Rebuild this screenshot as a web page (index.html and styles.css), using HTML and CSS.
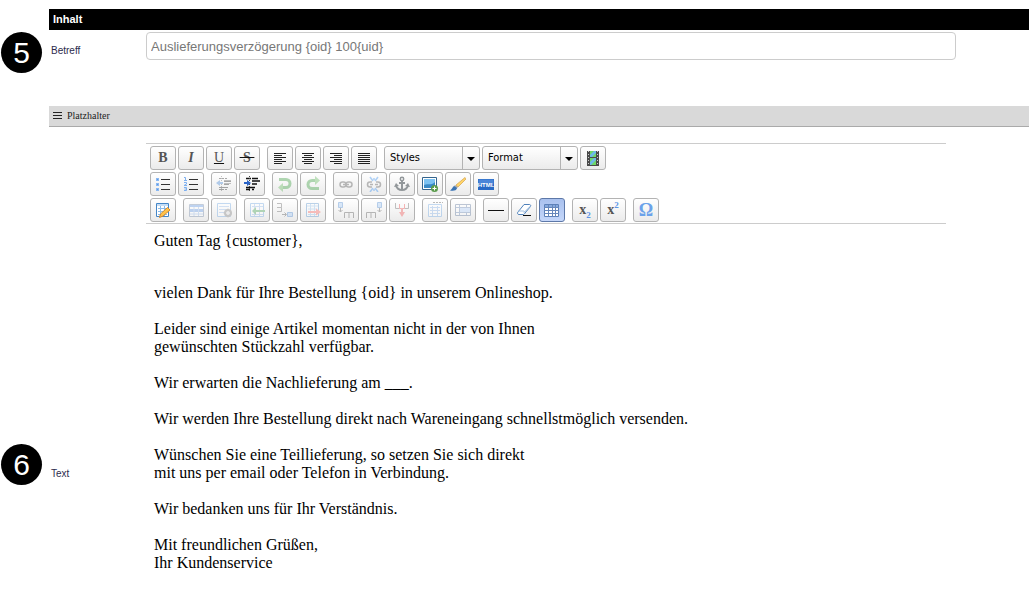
FILE: index.html
```html
<!DOCTYPE html>
<html lang="de">
<head>
<meta charset="utf-8">
<title>E-Mail-Vorlage</title>
<link rel="stylesheet" href="styles.css">
</head>
<body>
<main class="page">
<h1 class="section-title">Inhalt</h1>
<div class="row row-subject">
  <span class="badge">5</span>
  <label class="label" for="subject">Betreff</label>
  <input class="subject" id="subject" type="text" value="Auslieferungsverzögerung {oid} 100{uid}">
</div>
<button type="button" class="placeholder-bar">
  <svg class="menu-icon" viewBox="0 0 9 9"><path d="M0 1.500h9M0 4.500h9M0 7.500h9" stroke="#222"/></svg>
  Platzhalter
</button>
<div class="row row-text">
  <span class="badge">6</span>
  <span class="label" id="text-label">Text</span>
  <div class="editor">
    <div class="toolbar" role="toolbar" aria-label="Formatierung">
      <div class="tools">
        <div class="group">
          <button type="button" class="tool" aria-label="Fett"><span class="glyph bold">B</span></button>
          <button type="button" class="tool" aria-label="Kursiv"><span class="glyph italic">I</span></button>
          <button type="button" class="tool" aria-label="Unterstrichen"><span class="glyph underline">U</span></button>
          <button type="button" class="tool" aria-label="Durchgestrichen"><span class="glyph strike">&nbsp;S&nbsp;</span></button>
        </div>
        <div class="group">
          <button type="button" class="tool" aria-label="Linksbündig"><svg viewBox="0 0 16 16"><path d="M2 3.500h12M2 5.500h8M2 7.500h12M2 9.500h8M2 11.500h12M2 13.500h8" stroke="#222"/></svg></button>
          <button type="button" class="tool" aria-label="Zentriert"><svg viewBox="0 0 16 16"><path d="M2 3.500h12M4 5.500h8M2 7.500h12M4 9.500h8M2 11.500h12M4 13.500h8" stroke="#222"/></svg></button>
          <button type="button" class="tool" aria-label="Rechtsbündig"><svg viewBox="0 0 16 16"><path d="M2 3.500h12M6 5.500h8M2 7.500h12M6 9.500h8M2 11.500h12M6 13.500h8" stroke="#222"/></svg></button>
          <button type="button" class="tool" aria-label="Blocksatz"><svg viewBox="0 0 16 16"><path d="M2 3.500h12M2 5.500h12M2 7.500h12M2 9.500h12M2 11.500h12M2 13.500h12" stroke="#222"/></svg></button>
        </div>
        <div class="group">
          <span class="combo"><select aria-label="Styles"><option>Styles</option></select></span>
          <span class="combo"><select aria-label="Format"><option>Format</option></select></span>
          <button type="button" class="tool" aria-label="Medien"><svg viewBox="0 0 16 16"><path d="M2 1h12v15H2z" fill="#4a4a4a"/><path d="M5 1h6v6H5zM5 8h6v7H5z" fill="#6cb9ea"/><path d="M5 1h4L5 5zM11 3v4H7zM5 8h4l-4 4zM11 10v5H6z" fill="#6ed864"/><path d="M3.500 1v15M12.500 1v15" stroke="#ccc" stroke-dasharray="1 2"/></svg></button>
        </div>
      </div>
      <div class="tools">
        <div class="group">
          <button type="button" class="tool" aria-label="Aufzählung"><svg viewBox="0 0 16 16"><path d="M6 3.500h9M6 8.500h9M6 13.500h9" stroke="#333"/><path d="M1 2h3v3H1zM1 7h3v3H1zM1 12h3v3H1z" fill="#8ab8f2"/><path d="M2 3h1v1H2zM2 8h1v1H2zM2 13h1v1H2z" fill="#5b97e2"/></svg></button>
          <button type="button" class="tool" aria-label="Nummerierung"><svg viewBox="0 0 16 16"><path d="M6 3.500h9M6 8.500h9M6 13.500h9" stroke="#333"/><path d="M1 1.500h1.500v3M1 4.500h3M1 6.500h2.500v1.500L1 9.500h3M1 11.500h2.500v3H1M1.500 13h2" fill="none" stroke="#7eb0f0"/></svg></button>
        </div>
        <div class="group">
          <button type="button" class="tool" disabled aria-label="Einzug verkleinern"><svg viewBox="0 0 16 16"><path d="M3 2.500h5M9 2.500h2M8 5.500h7M8 8.500h5M3 11.500h9M3 13.500h5M9 13.500h2" stroke="#111"/><path d="M8 4.500h7M8 7.500h7" stroke="#555"/><path d="M5.500 0v16" stroke="#555" stroke-dasharray="1 1"/><path d="M0 7l4-3v2h3v2H4v2z" fill="#327bd2"/></svg></button>
          <button type="button" class="tool" aria-label="Einzug vergrößern"><svg viewBox="0 0 16 16"><path d="M2 2.500h5M8 2.500h6M8 5h8M8 8h5M2 11.500h9M2 13.500h4M8 13.500h2" stroke="#111" stroke-width="1.500"/><path d="M5.500 0v16" stroke="#444" stroke-dasharray="1 1"/><path d="M7 7L3 4v2H0v2h3v2z" fill="#2862c6"/></svg></button>
        </div>
        <div class="group">
          <button type="button" class="tool" disabled aria-label="Rückgängig"><svg viewBox="0 0 16 16"><path d="M2 3.500h7a4 4 0 0 1 0 8H5" fill="none" stroke="#26952b" stroke-width="3"/><path d="M6 7v9l-5-4.500z" fill="#55b34d"/></svg></button>
          <button type="button" class="tool" disabled aria-label="Wiederholen"><svg viewBox="0 0 16 16"><path d="M14 12.500H7a4 4 0 0 1 0-8h3" fill="none" stroke="#26952b" stroke-width="3"/><path d="M10 0v9l5-4.500z" fill="#55b34d"/></svg></button>
        </div>
        <div class="group">
          <button type="button" class="tool" disabled aria-label="Link"><svg viewBox="0 0 16 16"><g fill="none" stroke="#444" stroke-width="1.500"><rect x="2" y="6" width="6" height="5" rx="2.500"/><rect x="8" y="6" width="6" height="5" rx="2.500"/><path d="M5 8.500h6"/></g></svg></button>
          <button type="button" class="tool" disabled aria-label="Link entfernen"><svg viewBox="0 0 16 16"><g fill="none" stroke="#444" stroke-width="1.500"><path d="M6 6H4a2.500 2.500 0 0 0 0 5h2M10 6h2a2.500 2.500 0 0 1 0 5h-2M4 8.500h3M9 8.500h3"/></g><path d="M4 1l3 4M12 1L9 5M4 16l3-4M12 16l-3-4M8 2v2M8 13v2" stroke="#2485f0" stroke-width="1.500"/></svg></button>
          <button type="button" class="tool" aria-label="Anker"><svg viewBox="0 0 16 16"><g fill="none" stroke="#92979a" stroke-width="2"><circle cx="8" cy="3" r="1.700" stroke-width="1.500"/><path d="M8 5v9M5 7h6M2 9c0 3 3 5 6 5s6-2 6-5"/></g><path d="M0 11l2-4 3 3zM16 11l-2-4-3 3z" fill="#92979a"/></svg></button>
          <button type="button" class="tool" aria-label="Bild"><svg viewBox="0 0 16 16"><path d="M.500 1.500h14v12H.500z" fill="#fff" stroke="#35658e"/><path d="M2 3h11v9H2z" fill="#7cc2f2"/><path d="M2 9c3-2 7 1 11-3v6H2z" fill="#3989c6"/><circle cx="12.500" cy="12.500" r="3.500" fill="#5a9b4b"/><path d="M12.500 10.500v4M10.500 12.500h4" stroke="#fff"/></svg></button>
          <button type="button" class="tool" aria-label="Format bereinigen"><svg viewBox="0 0 16 16"><path d="M6 9L15 1.500 16 3 8 11z" fill="#ffd568" stroke="#d4a04a" stroke-width=".700"/><path d="M5 9l3 2-1.500 2L3.500 11z" fill="#aaa"/><path d="M4 10l3 2c-.500 3-4 3-7 2.500 2-1 2-3 4-4.500z" fill="#3973b4"/></svg></button>
          <button type="button" class="tool" aria-label="HTML-Quelltext"><svg viewBox="0 0 16 16"><path d="M0 3h16v11H0z" fill="#286ac5"/><path d="M.500 3.500h15v5H.500z" fill="#4a86d8"/><text class="html-text" x="8" y="11" text-anchor="middle">HTML</text></svg></button>
        </div>
      </div>
      <div class="tools">
        <div class="group">
          <button type="button" class="tool" aria-label="Tabelle bearbeiten"><svg viewBox="0 0 16 16"><path d="M1.500 1.500h12v13h-12z" fill="#fff" stroke="#4486c7"/><path d="M2 3h11M3 6.500h9M3 9.500h9M3 12.500h9M5.500 4v10M9.500 4v10" stroke="#8abbea"/><path d="M12.500 5.500L15 8l-7 6-3.500 1.500 1-3.500z" fill="#ffc34a" stroke="#d48a30"/></svg></button>
        </div>
        <div class="group">
          <button type="button" class="tool" disabled aria-label="Zeileneigenschaften"><svg viewBox="0 0 16 16"><path d="M1.500 2.500h14v12h-14z" fill="#fff" stroke="#637b9e"/><path d="M2 3h13v2H2zM2 7h13v3H2z" fill="#528ee3"/><path d="M6 5v9M10.500 5v9M2 12h13" stroke="#8eb4e8"/></svg></button>
          <button type="button" class="tool" disabled aria-label="Zelleneigenschaften"><svg viewBox="0 0 16 16"><path d="M1.500 1.500h13v13h-13z" fill="#fff" stroke="#5e9de0"/><path d="M3 4.500h10M3 7.500h10M3 10.500h8" stroke="#8eb4e8"/><circle cx="12" cy="11" r="3" fill="#ddd" stroke="#777" stroke-width="2"/><path d="M12 6.500v2M12 13.500v2M7.500 11h2M14.500 11h1.500M9 8l1.500 1.500M15 8l-1.500 1.500M9 14l1.500-1.500M15 14l-1.500-1.500" stroke="#777"/></svg></button>
        </div>
        <div class="group">
          <button type="button" class="tool" disabled aria-label="Zeile davor"><svg viewBox="0 0 16 16"><path d="M1.500 1.500h13v13h-13z" fill="#fff" stroke="#5e9de0"/><path d="M3 4.500h11M3 12.500h11M5.500 2v12M10.500 2v12" stroke="#8eb4e8"/><path d="M3 9l4-4v3h9v2H7v3z" fill="#359a45"/></svg></button>
          <button type="button" class="tool" disabled aria-label="Zeile danach"><svg viewBox="0 0 16 16"><path d="M0 1.500h4.500v4H0M0 9.500h4.500v-4" fill="none" stroke="#555"/><path d="M5 12.500h4M7.500 10.500l2 2-2 2" fill="none" stroke="#444"/><path d="M10.500 10.500h5v4h-5z" fill="#9bc4f5" stroke="#397dce"/></svg></button>
          <button type="button" class="tool" disabled aria-label="Zeile löschen"><svg viewBox="0 0 16 16"><path d="M1.500 1.500h12v13h-12z" fill="#fff" stroke="#4486c7"/><path d="M2 4h11M3 7h9M3 12.500h9M5.500 2v12M9.500 2v12" stroke="#8abbea"/><path d="M3 9h8V6.500l5 3.500-5 3.500V11H3z" fill="#fa5750"/></svg></button>
        </div>
        <div class="group">
          <button type="button" class="tool" disabled aria-label="Spalte davor"><svg viewBox="0 0 16 16"><path d="M.500.500h4v5h-4z" fill="#9bc4f5" stroke="#397dce"/><path d="M2.500 6v4M.500 8l2 2 2-2M6.500 16v-5.500h9V16M11 11v5" fill="none" stroke="#444"/></svg></button>
          <button type="button" class="tool" disabled aria-label="Spalte danach"><svg viewBox="0 0 16 16"><path d="M11.500.500h4v5h-4z" fill="#9bc4f5" stroke="#397dce"/><path d="M13.500 6v4M11.500 8l2 2 2-2M.500 16v-5.500h9V16M5 11v5" fill="none" stroke="#444"/></svg></button>
          <button type="button" class="tool" disabled aria-label="Spalte löschen"><svg viewBox="0 0 16 16"><path d="M1.500 1v5.500h4M14.500 1v5.500h-4" fill="none" stroke="#555"/><path d="M5.500 2v4.500h5V2" fill="none" stroke="#e33"/><path d="M7 6h2v4h2l-3 5-3-5h2z" fill="#f04545"/></svg></button>
        </div>
        <div class="group">
          <button type="button" class="tool" disabled aria-label="Zellen teilen"><svg viewBox="0 0 16 16"><path d="M1.500 2.500h13v12h-13z" fill="#fff" stroke="#5e9de0"/><path d="M3 5.500h10M3 8.500h10M3 11.500h10M5.500 4v10M10.500 4v10" stroke="#78aae6"/><path d="M6 .500h10" stroke="#444" stroke-dasharray="2 1"/></svg></button>
          <button type="button" class="tool" disabled aria-label="Zellen verbinden"><svg viewBox="0 0 16 16"><path d="M.500 2.500h15v11H.500z" fill="#fff" stroke="#4b6690"/><path d="M4.500 3v10M11.500 3v2M1 5.500h14M1 10.500h14M11.500 11v2" stroke="#5b7cae"/><path d="M5 6h10v4H5z" fill="#abcdfc"/></svg></button>
        </div>
        <div class="group">
          <button type="button" class="tool" aria-label="Linie"><svg viewBox="0 0 16 16"><path d="M0 8.500h16" stroke="#111"/></svg></button>
          <button type="button" class="tool" aria-label="Formatierung löschen"><svg viewBox="0 0 16 16"><path d="M7 13.500h8" stroke="#111"/><path d="M8 2.500h5.500c1 0 1.500 1 1 2L9 11c-.500 1-1 1.500-2 1.500H3c-1.500 0-2-1.500-1-2.500z" fill="#fff" stroke="#4f81ba"/><path d="M2 9h5.500c1 0 1 1 .500 1.500L14.500 4" fill="none" stroke="#9cbde0"/></svg></button>
          <button type="button" class="tool active" aria-pressed="true" aria-label="Hilfslinien"><svg viewBox="0 0 16 16"><path d="M.500 2.500h14v12H.500z" fill="#fff" stroke="#5c80b8"/><path d="M1 3h13v2H1z" fill="#86a9dd"/><path d="M0 5.500h15M0 8.500h15M0 11.500h15M4.500 3v12M8.500 3v12M11.500 3v12" stroke="#6687bb"/></svg></button>
        </div>
        <div class="group">
          <button type="button" class="tool" aria-label="Tiefgestellt"><span class="glyph script">x<sub>2</sub></span></button>
          <button type="button" class="tool" aria-label="Hochgestellt"><span class="glyph script">x<sup>2</sup></span></button>
        </div>
        <div class="group">
          <button type="button" class="tool" aria-label="Sonderzeichen"><span class="glyph omega">Ω</span></button>
        </div>
      </div>
    </div>
    <div class="content" contenteditable="true" role="textbox" aria-multiline="true" aria-labelledby="text-label" spellcheck="false">
      <p>Guten Tag {customer},</p>
      <p><br>vielen Dank für Ihre Bestellung {oid} in unserem Onlineshop.<br><br>Leider sind einige Artikel momentan nicht in der von Ihnen<br>gewünschten Stückzahl verfügbar.<br><br>Wir erwarten die Nachlieferung am ___.<br><br>Wir werden Ihre Bestellung direkt nach Wareneingang schnellstmöglich versenden.<br><br>Wünschen Sie eine Teillieferung, so setzen Sie sich direkt<br>mit uns per email oder Telefon in Verbindung.<br><br>Wir bedanken uns für Ihr Verständnis.<br><br>Mit freundlichen Grüßen,<br>Ihr Kundenservice</p>
    </div>
  </div>
</div>
</main>
</body>
</html>
```
FILE: styles.css
```css
* { box-sizing: border-box; }
body {
  margin: 0;
  background: #fff;
  color: #000;
  font-family: "Liberation Sans", Arial, sans-serif;
}
.page { padding-top: 9px; }
.section-title {
  margin: 0 0 0 49px;
  padding: 0 4px;
  background: #000;
  color: #fff;
  font-size: 11px;
  line-height: 21px;
}
.row {
  display: grid;
  grid-template-columns: 49px 97px minmax(0, 1fr);
  align-items: start;
}
.row-subject { padding: 2px 0 33px; }
.badge {
  width: 41px;
  height: 41px;
  margin-left: 1px;
  border-radius: 50%;
  background: #000;
  color: #fff;
  font-size: 30px;
  line-height: 41px;
  text-align: center;
}
.label {
  padding: 12px 2px 0;
  color: #2b2b4c;
  font-size: 10px;
  line-height: 14px;
}
.subject {
  width: 100%;
  max-width: 810px;
  height: 28px;
  padding: 0 4px;
  border: 1px solid #ccc;
  border-radius: 4px;
  color: #777;
  font-family: inherit;
  font-size: 13px;
}
.placeholder-bar {
  display: flex;
  align-items: center;
  gap: 5px;
  width: calc(100% - 49px);
  height: 21px;
  margin-left: 49px;
  padding: 0 4px 1px;
  border: 0;
  border-bottom: 1px solid #aaa;
  background: #d9d9d9;
  color: #222;
  font-family: "Liberation Serif", "Times New Roman", serif;
  font-size: 10px;
}
.menu-icon { width: 9px; height: 9px; }
.row-text { padding-top: 16px; }
.row-text .badge { margin-top: 301px; }
.row-text .label { padding-top: 324px; }
.toolbar {
  display: grid;
  gap: 2px;
  max-width: 800px;
  padding: 2px 4px 1px;
  border: solid #ccc;
  border-width: 1px 0;
}
.tools { display: flex; flex-wrap: wrap; gap: 2px 7px; }
.group { display: flex; gap: 2px; }
.tool {
  display: grid;
  place-items: center;
  width: 26px;
  height: 24px;
  padding: 0;
  border: 1px solid #b3b3b3;
  border-radius: 3px;
  background: linear-gradient(#fff, #ebebeb);
}
.tool svg { display: block; width: 16px; height: 16px; }
.tool:disabled svg { opacity: 0.35; }
.tool.active {
  border-color: #5d78a8;
  background: linear-gradient(#a9c1ee, #c5d7fa);
}
.glyph {
  color: #555;
  font-family: "Liberation Serif", "Times New Roman", serif;
  font-size: 14px;
  line-height: 16px;
}
.bold { font-weight: bold; }
.italic { font-style: italic; font-weight: bold; }
.underline { text-decoration: underline #111; }
.strike { text-decoration: line-through #111; font-weight: bold; }
.script { font-weight: bold; }
.script sub, .script sup {
  color: #5c95e6;
  font-size: 9px;
  line-height: 0;
}
.omega {
  color: #6ba2ea;
  font-size: 18px;
  font-weight: bold;
}
.html-text {
  fill: #fff;
  font: bold 6px "Liberation Sans", Arial, sans-serif;
}
.combo { position: relative; width: 96px; height: 24px; }
.combo select {
  width: 100%;
  height: 100%;
  padding: 0 20px 1px 5px;
  appearance: none;
  border: 1px solid #b3b3b3;
  border-radius: 3px;
  background: linear-gradient(#fff, #ebebeb);
  color: #000;
  font-family: "DejaVu Sans Condensed", Tahoma, sans-serif;
  font-size: 11px;
}
.combo::before {
  content: "";
  position: absolute;
  top: 1px;
  right: 17px;
  bottom: 1px;
  border-left: 1px solid #b3b3b3;
  pointer-events: none;
}
.combo::after {
  content: "";
  position: absolute;
  top: 11px;
  right: 5px;
  border: 4px solid transparent;
  border-top-color: #000;
  border-bottom: 0;
  pointer-events: none;
}
.content {
  max-width: 800px;
  padding: 8px;
  outline: 0;
  font-family: "Liberation Serif", "Times New Roman", serif;
  font-size: 16px;
  line-height: 18px;
}
.content p { margin: 0 0 16px; }
```
